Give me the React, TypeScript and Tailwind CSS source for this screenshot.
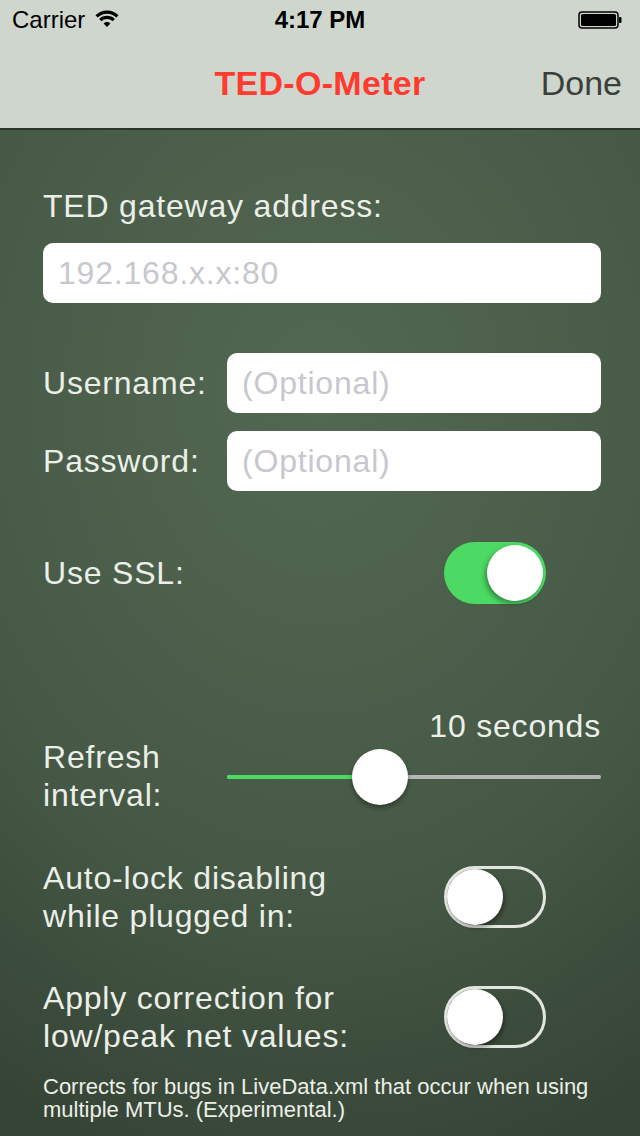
import { useState } from 'react';

const Toggle = ({ on }: { on: boolean }) => {
  return on ? (
    <div className="relative w-[102px] h-[62px] rounded-full bg-[#4cd964] mr-[55px] shrink-0">
      <div className="absolute right-[3px] top-[3px] w-[56px] h-[56px] rounded-full bg-white shadow-[-2px_3px_5px_rgba(0,0,0,0.35)]"></div>
    </div>
  ) : (
    <div className="relative w-[102px] h-[62px] rounded-full border-[3px] border-[#e3e5e1] mr-[55px] shrink-0">
      <div className="absolute left-0 top-0 w-[56px] h-[56px] rounded-full bg-white shadow-[2px_3px_4px_rgba(0,0,0,0.35)]"></div>
    </div>
  );
};

const Field = ({ placeholder }: { placeholder: string }) => (
  <input
    placeholder={placeholder}
    className="w-full h-[60px] rounded-[10px] bg-white px-[15px] text-[32px] tracking-[0.8px] text-black placeholder:text-[#c7c7cd] outline-none"
  />
);

const App = () => {
  const [value] = useState(41);

  return (
    <div className="w-[640px] h-[1136px] flex flex-col overflow-hidden font-['Liberation_Sans',Arial,sans-serif] bg-[radial-gradient(ellipse_100%_70%_at_50%_35%,#536853_0%,#465946_60%,#364436_100%)]">
      {/* Header */}
      <header className="h-[130px] bg-[#cfd6ce] border-b-2 border-[#2c342c] shrink-0">
        <div className="h-[40px] flex items-center px-[12px] relative text-[24px] text-black">
          <span>Carrier</span>
          <svg width="26" height="20" viewBox="0 0 24 19" className="ml-[9px] mt-[-2px]">
            <path d="M2.1 7.1 A14 14 0 0 1 21.9 7.1" fill="none" stroke="#000" strokeWidth="3" />
            <path d="M5.6 10.6 A9 9 0 0 1 18.4 10.6" fill="none" stroke="#000" strokeWidth="3" />
            <path d="M12 17 L8.8 13.8 A4.5 4.5 0 0 1 15.2 13.8 Z" fill="#000" />
          </svg>
          <span className="absolute left-0 right-0 text-center font-bold pointer-events-none">4:17 PM</span>
          <svg width="44" height="18" viewBox="0 0 44 18" className="ml-auto mr-[6px]">
            <rect x="1" y="1" width="39" height="16" rx="3" fill="none" stroke="#000" strokeWidth="1.5" />
            <rect x="3" y="3" width="35" height="12" rx="1.5" fill="#000" />
            <rect x="41" y="6" width="2.5" height="6" rx="1" fill="#000" />
          </svg>
        </div>
        <div className="h-[86px] flex items-center relative">
          <span className="absolute left-0 right-0 text-center text-[34px] font-bold text-[#ff3b30] tracking-[0.3px]">TED-O-Meter</span>
          <span className="ml-auto mr-[18px] text-[34px] text-[#3c403a]">Done</span>
        </div>
      </header>

      {/* Settings */}
      <main className="flex-1 flex flex-col pl-[43px] pr-[39px] pt-[57px] text-[#ebefe8] text-[32px] leading-[38px] tracking-[0.8px]">
        <div>TED gateway address:</div>
        <div className="mt-[18px]">
          <Field placeholder="192.168.x.x:80" />
        </div>

        <div className="mt-[50px] flex items-center">
          <span className="w-[184px] shrink-0">Username:</span>
          <Field placeholder="(Optional)" />
        </div>
        <div className="mt-[18px] flex items-center">
          <span className="w-[184px] shrink-0">Password:</span>
          <Field placeholder="(Optional)" />
        </div>

        <div className="mt-[51px] flex items-center justify-between">
          <span>Use SSL:</span>
          <Toggle on={true} />
        </div>

        <div className="mt-[103px] flex">
          <span className="w-[184px] shrink-0 mt-[31px]">Refresh<br />interval:</span>
          <div className="flex-1 flex flex-col">
            <div className="text-right">10 seconds</div>
            <div className="relative h-[56px] mt-[4px]">
              <div className="absolute left-0 right-0 top-[26px] h-[4px] rounded-full bg-[#b6b6b6]"></div>
              <div className="absolute left-0 top-[26px] h-[4px] rounded-full bg-[#4cd964]" style={{ width: `${value}%` }}></div>
              <div
                className="absolute top-0 w-[56px] h-[56px] rounded-full bg-white shadow-[0_3px_5px_rgba(0,0,0,0.35)] -translate-x-1/2"
                style={{ left: `${value}%` }}
              ></div>
            </div>
          </div>
        </div>

        <div className="mt-[45px] flex items-center justify-between">
          <span>Auto-lock disabling<br />while plugged in:</span>
          <Toggle on={false} />
        </div>

        <div className="mt-[44px] flex items-center justify-between">
          <span>Apply correction for<br />low/peak net values:</span>
          <Toggle on={false} />
        </div>

        <p className="mt-[20px] text-[22px] leading-[23px] tracking-normal">
          Corrects for bugs in LiveData.xml that occur when using multiple MTUs. (Experimental.)
        </p>
      </main>
    </div>
  );
};

export default App;
